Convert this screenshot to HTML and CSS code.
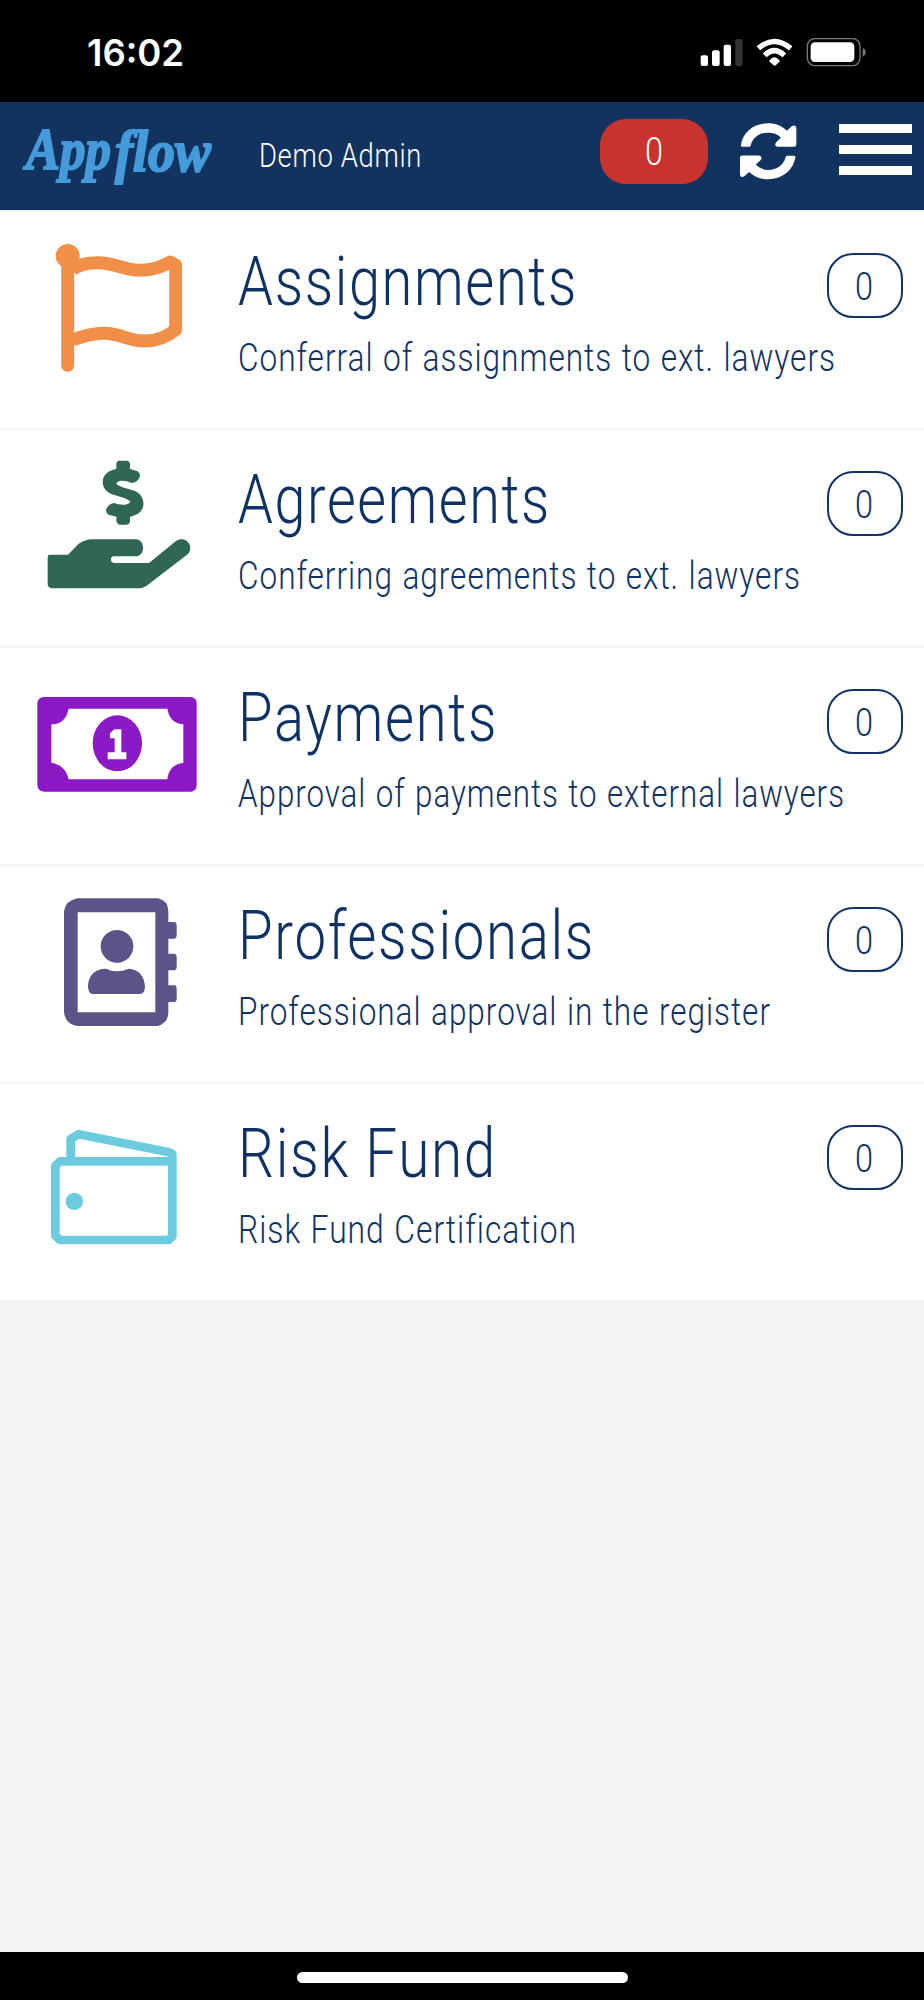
FILE: index.html
```html
<!DOCTYPE html>
<html lang="en">
<head>
<meta charset="utf-8">
<title>Appflow</title>
<link rel="stylesheet" href="styles.css">
</head>
<body>
<div class="status">
  <svg class="clock" width="110" height="102"><text x="-1" y="66" textLength="97" lengthAdjust="spacingAndGlyphs">16:02</text></svg>
  <svg class="signals" width="170" height="102" viewBox="0 0 510 306">
    <g fill="#fff">
      <rect x="14" y="166" width="22" height="32" rx="6"/><rect x="48" y="151" width="23" height="47" rx="6"/><rect x="83" y="134" width="22" height="64" rx="6"/>
      <rect x="118" y="117" width="22" height="81" rx="6" fill="#333"/>
      <path d="M219 184Q235 159 252 184L240 195Q236 199 232 195Z"/>
      <rect x="344" y="127" width="131" height="59" rx="13"/>
    </g>
    <g fill="none" stroke="#fff" stroke-width="16"><path d="M187 145Q235 104 284 145"/><path d="M206 166Q235 138 265 166"/></g>
    <rect x="334" y="116" width="158" height="81" rx="22" fill="none" stroke="#777" stroke-width="4"/>
    <path d="M500 144Q509 148 509 157T500 170Z" fill="#777"/>
  </svg>
</div>
<header class="bar">
  <svg class="logo" width="200" height="107"><text x="3" y="67" textLength="85" lengthAdjust="spacingAndGlyphs">App</text><text x="92" y="69" textLength="96" lengthAdjust="spacingAndGlyphs">flow</text></svg>
  <svg class="user" width="170" height="107"><text x="-1" y="65" textLength="163" lengthAdjust="spacingAndGlyphs">Demo Admin</text></svg>
  <div class="alerts"><svg width="30" height="64"><text x="6" y="46" textLength="18" lengthAdjust="spacingAndGlyphs">0</text></svg></div>
  <svg class="sync" width="57" height="57" viewBox="834 369 170 170">
    <path d="M840 440Q836 440 837 434C843 396 876 370 918 370C941 370 959 378 974 392L989 378Q1001 373 1002 384V434Q1002 440 996 440H946Q935 438 941 428L956 412C945 402 933 398 918 398C891 398 872 412 866 436Q865 440 861 440Z"/>
    <path d="M840 466H891Q902 469 896 479L881 493C891 503 904 509 918 509C944 509 964 494 970 471Q971 467 975 467H995Q1000 467 999 473C992 511 959 537 918 537C896 537 876 529 861 515L847 528Q836 534 834 523V473Q834 466 840 466Z"/>
  </svg>
  <div class="menu"><i></i><i></i><i></i></div>
</header>
<main>
  <section class="row">
    <svg class="icon" viewBox="0 0 714 648"><g transform="translate(0 9)" fill="none" stroke="#ef8f48">
      <circle cx="203" cy="123" r="36" fill="#ef8f48" stroke="none"/>
      <path d="M203 130V451" stroke-width="39" stroke-linecap="round"/>
      <path d="M216 164C235 149 260 143 293 143C345 143 370 166 420 166C460 166 484 155 511 141L527 151V344C500 366 470 378 434 378C380 378 365 355 311 355C275 355 247 364 218 375" stroke-width="39" stroke-linejoin="round"/>
    </g></svg>
    <svg class="text"><text class="title" x="0" y="93" textLength="340" lengthAdjust="spacingAndGlyphs">Assignments</text><text class="sub" x="0" y="158.5" textLength="598" lengthAdjust="spacingAndGlyphs">Conferral of assignments to ext. lawyers</text></svg>
    <div class="count"><svg width="30" height="60"><text x="5" y="44.5" textLength="18" lengthAdjust="spacingAndGlyphs">0</text></svg></div>
  </section>
  <section class="row">
    <svg class="icon" viewBox="0 0 714 648"><g fill="#2f6655">
      <path d="M147 374H204L235 342Q254 328 278 328H409C436 331 436 377 409 379H341Q332 381 333 390Q334 398 343 399H447L528 333C554 315 584 344 565 371L440 467Q428 475 416 475H153Q143 471 143 462V383Q143 376 147 374Z"/>
      <path d="M356 92H382Q390 94 390 102V117L411 123Q424 130 418 144Q409 160 392 158Q381 151 362 152Q350 154 349 163L365 171L403 182C440 196 439 246 403 256L390 261V274Q389 284 380 284H358Q350 282 349 273V260L326 254Q315 247 319 236Q326 221 344 219Q354 225 376 224Q390 221 391 214L375 205L336 193C299 180 299 132 336 121L349 116V101Q350 93 356 92Z"/>
    </g></svg>
    <svg class="text"><text class="title" x="0" y="93" textLength="313" lengthAdjust="spacingAndGlyphs">Agreements</text><text class="sub" x="0" y="158.5" textLength="563" lengthAdjust="spacingAndGlyphs">Conferring agreements to ext. lawyers</text></svg>
    <div class="count"><svg width="30" height="60"><text x="5" y="44.5" textLength="18" lengthAdjust="spacingAndGlyphs">0</text></svg></div>
  </section>
  <section class="row">
    <svg class="icon" viewBox="0 0 714 648"><g transform="translate(0 -9)" fill="#8b19c6">
      <path fill-rule="evenodd" d="M132 156H571Q589 157 590 174V421Q589 439 573 440H132Q113 438 112 419V174Q114 158 132 156ZM206 191Q196 238 154 238V353Q197 361 206 403H502Q507 358 550 353V238Q509 235 502 191Z"/>
      <ellipse cx="352" cy="295" rx="74" ry="84"/>
      <path fill="#fff" d="M343 253H364V322H379V343H323V322H344V280H330V265Z"/>
    </g></svg>
    <svg class="text"><text class="title" x="0" y="93" textLength="260" lengthAdjust="spacingAndGlyphs">Payments</text><text class="sub" x="0" y="158.5" textLength="607" lengthAdjust="spacingAndGlyphs">Approval of payments to external lawyers</text></svg>
    <div class="count"><svg width="30" height="60"><text x="5" y="44.5" textLength="18" lengthAdjust="spacingAndGlyphs">0</text></svg></div>
  </section>
  <section class="row">
    <svg class="icon" viewBox="0 0 714 648"><g transform="translate(0 -3)" fill="#5b5489">
      <path fill-rule="evenodd" d="M232 100H474Q505 107 505 139V171H524Q530 173 530 180V213Q529 220 523 221H505V266H524Q530 268 530 275V309Q529 315 523 316H505V361H524Q530 363 530 370V404Q529 410 523 411H505V444Q503 475 473 483H232Q196 477 192 442V138Q197 107 232 100ZM233 142V442H466V142Z"/>
      <circle cx="351" cy="244" r="49"/>
      <path d="M264 362C265 332 284 311 318 311Q350 326 386 311C417 313 434 335 435 365Q434 386 420 387H277Q264 384 264 362Z"/>
    </g></svg>
    <svg class="text"><text class="title" x="0" y="93" textLength="357" lengthAdjust="spacingAndGlyphs">Professionals</text><text class="sub" x="0" y="158.5" textLength="533" lengthAdjust="spacingAndGlyphs">Professional approval in the register</text></svg>
    <div class="count"><svg width="30" height="60"><text x="5" y="44.5" textLength="18" lengthAdjust="spacingAndGlyphs">0</text></svg></div>
  </section>
  <section class="row">
    <svg class="icon" viewBox="0 0 714 648"><g transform="translate(0 3)" fill="none" stroke="#6ccbde" stroke-width="26" stroke-linejoin="round">
      <path d="M517 230V454L506 465H180L166 452V242L181 229H517V207L504 201L236 148L212 162V229"/>
      <circle cx="223" cy="349" r="26" fill="#6ccbde" stroke="none"/>
    </g></svg>
    <svg class="text"><text class="title" x="0" y="93" textLength="259" lengthAdjust="spacingAndGlyphs">Risk Fund</text><text class="sub" x="0" y="158.5" textLength="339" lengthAdjust="spacingAndGlyphs">Risk Fund Certification</text></svg>
    <div class="count"><svg width="30" height="60"><text x="5" y="44.5" textLength="18" lengthAdjust="spacingAndGlyphs">0</text></svg></div>
  </section>
</main>
<footer class="home"><i></i></footer>
</body>
</html>
```
FILE: styles.css
```css
* { box-sizing: border-box; }
body {
  margin: 0;
  width: 924px;
  height: 2000px;
  display: flex;
  flex-direction: column;
  background: #f4f4f4;
  font-family: Roboto, "Liberation Sans", sans-serif;
  font-weight: 300;
}
svg { display: block; flex: none; overflow: visible; }
.status {
  height: 102px;
  flex: none;
  display: flex;
  justify-content: space-between;
  padding: 0 58.5px 0 88px;
  background: #000;
}
.clock { font: 600 37px Inter, sans-serif; fill: #fff; }
.bar {
  height: 108px;
  flex: none;
  display: flex;
  align-items: flex-start;
  padding-left: 23px;
  background: #123260;
  border-bottom: 1px solid #0b2a58;
}
.logo { font: italic 700 59px "Liberation Serif", serif; fill: #459bd9; stroke: #459bd9; stroke-width: 2px; }
.user { margin-left: 37px; font-size: 33.3px; letter-spacing: 0.8px; fill: #fff; }
.alerts {
  display: flex;
  justify-content: center;
  width: 108px;
  height: 65px;
  margin: 17px 0 0 170px;
  border-radius: 26px;
  background: #c8342d;
  font-size: 39px;
  fill: #fff;
}
.sync { margin: 21px 0 0 32px; fill: #fff; }
.menu { width: 73px; margin: 22px 0 0 42px; display: grid; gap: 12px; }
.menu i { height: 9px; background: #fff; }
main { flex: 1; }
.row {
  display: flex;
  height: 218px;
  border-top: 2px solid #f4f4f4;
  background: #fff;
}
.icon { width: 238px; height: 216px; }
.text { width: 620px; height: 216px; fill: #0f3264; }
.title { font-size: 68.5px; letter-spacing: 2px; }
.sub { font-size: 38.5px; letter-spacing: 1.2px; word-spacing: 1px; }
.count {
  display: flex;
  justify-content: center;
  width: 76px;
  height: 65px;
  margin: 41px 0 0 -31px;
  border: 2px solid #123465;
  border-radius: 26px;
  font-size: 38.5px;
  fill: #0f3264;
}
.home {
  height: 48px;
  flex: none;
  display: flex;
  justify-content: center;
  padding-top: 20px;
  background: #000;
}
.home i { width: 331px; height: 11px; border-radius: 6px; background: #fff; }
```
